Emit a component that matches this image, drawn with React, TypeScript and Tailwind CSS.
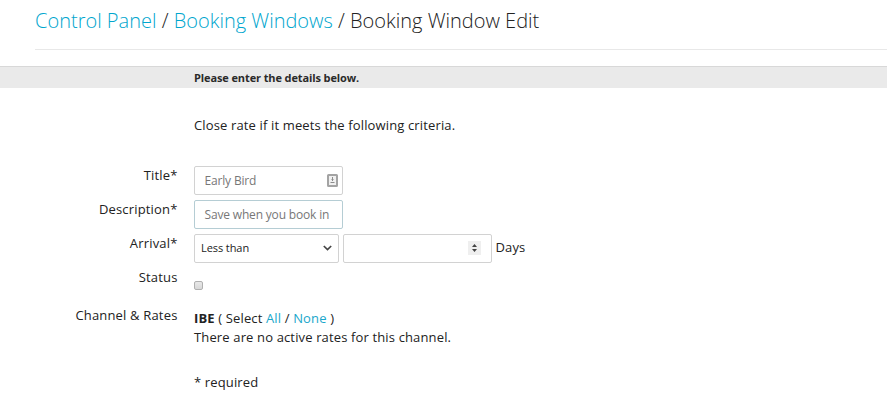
import React from "react";

function Row({ label, height, children }: { label: string; height: string; children: React.ReactNode }) {
  return (
    <div className={`flex items-start ${height}`}>
      <div className="w-[178px] shrink-0 pr-[0.5px] text-right leading-[19px] tracking-[0.17px]">{label}</div>
      <div className="ml-4 flex">{children}</div>
    </div>
  );
}

const box = "flex h-[29px] w-[149px] items-center rounded-[2px] border bg-white";

export default function App() {
  return (
    <div className="h-[413px] w-[887px] overflow-hidden whitespace-nowrap bg-white font-['Open_Sans',sans-serif] text-[13px] leading-[19px] tracking-[0.14px] text-[#222]">
      <h1 className="ml-[35px] h-[50px] border-b border-[#e8e8e8] pt-[7px] text-[20px] font-light leading-[27px] tracking-normal">
        <a className="text-[#00a6ce]">Control Panel</a> / <a className="text-[#00a6ce]">Booking Windows</a> / Booking Window Edit
      </h1>
      <div className="mt-4 h-[22px] border-t border-[#d8d8d8] bg-[#eaeaea] pl-[194px] text-[11px] font-bold leading-[22px] tracking-[-0.11px] text-[#2a2a2a]">
        Please enter the details below.
      </div>
      <p className="ml-[194px] mt-7 h-[50px]">Close rate if it meets the following criteria.</p>
      <Row label="Title*" height="h-[34px]">
        <div className={`${box} justify-between border-[#d2d2d2] pl-[9.5px] pr-1 text-[12px] tracking-[-0.17px] text-[#777]`}>
          <span>Early Bird</span>
          <svg width="11" height="13" viewBox="0 0 11 13">
            <rect x="1" y="1" width="9" height="11" rx="0.5" fill="#f0f0f0" stroke="#a3a3a3" strokeWidth="2" />
            <path d="M5.5 3v4M4.5 5.5h2M3.5 8.5h4" stroke="#8c8c8c" fill="none" />
          </svg>
        </div>
      </Row>
      <Row label="Description*" height="h-[34px]">
        <div className={`${box} border-[#b5cdd4] pl-[9.5px] text-[12px] tracking-[-0.17px] text-[#777]`}>Save when you book in</div>
      </Row>
      <Row label="Arrival*" height="h-[34px]">
        <div className="flex h-[29px] w-[145px] items-center justify-between rounded-[2px] border border-[#d2d2d2] pl-1.5 pr-1.5 text-[11px] tracking-[-0.08px]">
          <span className="mb-[3px]">Less than</span>
          <svg width="9" height="6" viewBox="0 0 9 6" className="mb-0.5">
            <path d="M.8 1l3.7 3.5L8.2 1" fill="none" stroke="#444" strokeWidth="1.7" />
          </svg>
        </div>
        <div className={`${box} ml-1 justify-end border-[#d2d2d2] pr-2.5`}>
          <div className="mb-px flex h-[14px] w-[13px] items-center justify-center bg-[#efefef]">
            <svg width="5" height="8" viewBox="0 0 5 8">
              <path d="M0 3L2.5 0 5 3zM0 5h5L2.5 8z" fill="#444" />
            </svg>
          </div>
        </div>
        <span className="ml-[3.5px] mt-1">Days</span>
      </Row>
      <Row label="Status" height="h-[38px]">
        <div className="mt-[13px] h-[9px] w-[9px] rounded-[2px] border border-[#b0b0b0] bg-gradient-to-b from-[#e8e8e8] to-[#d8d8d8]" />
      </Row>
      <Row label="Channel & Rates" height="h-[67px]">
        <div className="mt-[3px]">
          <div><b>IBE</b> ( Select <a className="text-[#1aa7cb]">All</a> / <a className="text-[#1aa7cb]">None</a> )</div>
          <div>There are no active rates for this channel.</div>
        </div>
      </Row>
      <p className="ml-[194px]">* required</p>
    </div>
  );
}
